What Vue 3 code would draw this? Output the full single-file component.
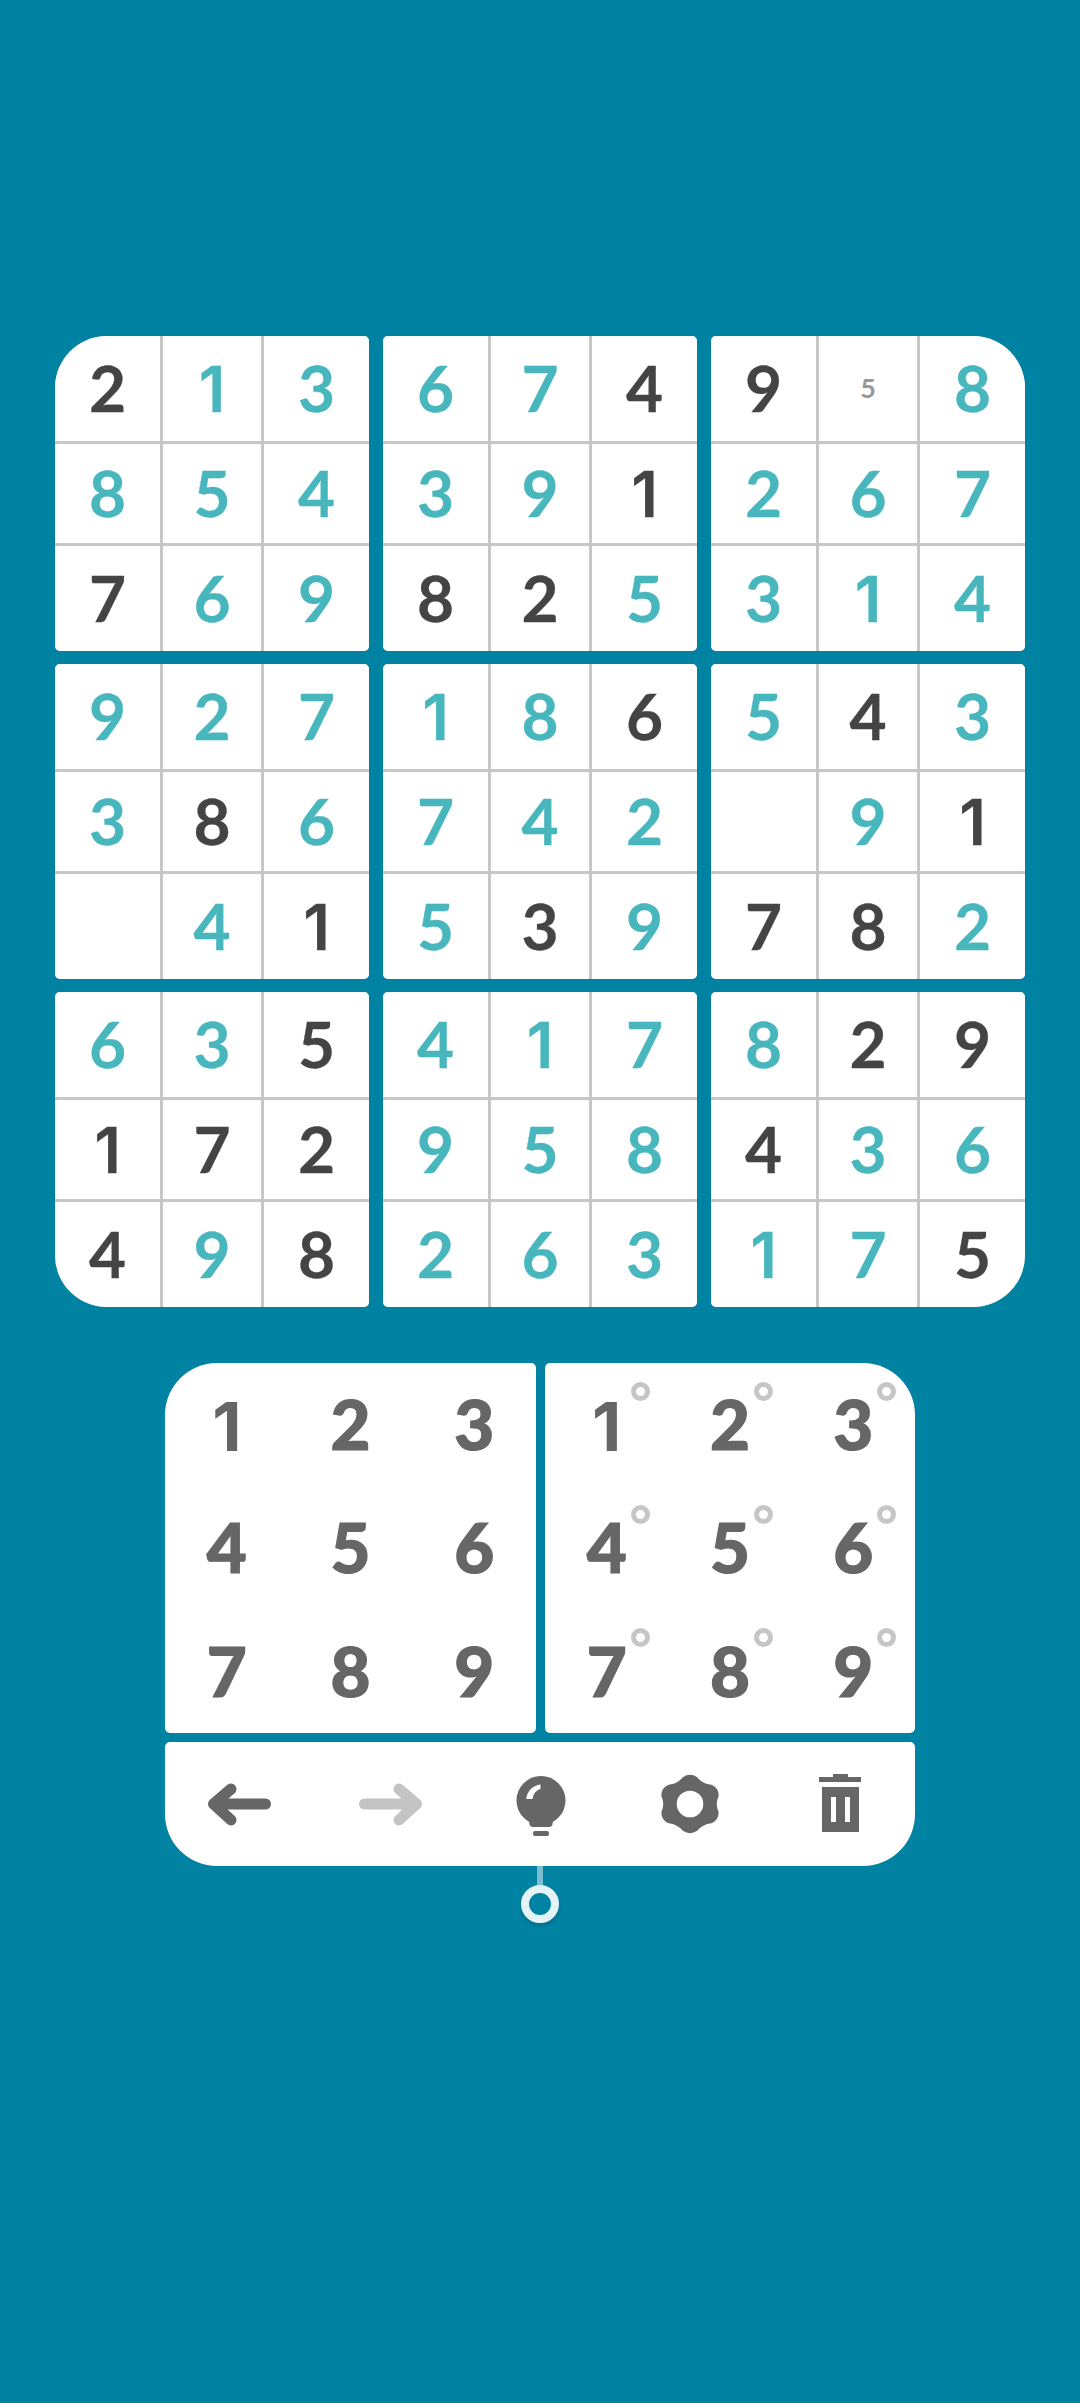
<script setup>
// d = given digit, t = player's digit, n = pencil note, _ = empty
const boxes = [
  { digits: '213854769', kinds: 'dtttttdtt' },
  { digits: '674391825', kinds: 'ttdttdddt' },
  { digits: '958267314', kinds: 'dnttttttt' },
  { digits: '927386_41', kinds: 'ttttdt_td' },
  { digits: '186742539', kinds: 'ttdttttdt' },
  { digits: '543_91782', kinds: 'tdt_tdddt' },
  { digits: '635172498', kinds: 'ttdddddtd' },
  { digits: '417958263', kinds: 'ttttttttt' },
  { digits: '829436175', kinds: 'tdddttttd' }
]

const cellsOf = (box) =>
  box.digits.split('').map((digit, i) => ({
    digit: digit === '_' ? '' : digit,
    kind: box.kinds[i]
  }))

const numbers = [1, 2, 3, 4, 5, 6, 7, 8, 9]

// hexagon with rounded corners and slightly hollow sides, in a 64x64 icon
const polar = (r, deg) => {
  const a = (deg * Math.PI) / 180
  return (32 + 1.04 * r * Math.sin(a)).toFixed(2) + ' ' + (32 - 0.97 * r * Math.cos(a)).toFixed(2)
}
let gearPath = 'M' + polar(28.5, -14)
for (let k = 0; k < 6; k++) {
  const a = k * 60
  gearPath += ' Q' + polar(32.6, a) + ' ' + polar(28.5, a + 14)
  gearPath += ' Q' + polar(24, a + 30) + ' ' + polar(28.5, a + 46)
}
gearPath += ' Z'
</script>

<template>
  <div class="page">
    <div class="board">
      <div v-for="(box, b) in boxes" :key="b" class="box">
        <div
          v-for="(cell, c) in cellsOf(box)"
          :key="c"
          class="cell"
          :class="['kind-' + cell.kind, { one: cell.digit === '1' }]"
        >{{ cell.digit }}</div>
      </div>
    </div>

    <div class="controls">
      <div class="pads">
        <div class="pad">
          <div v-for="n in numbers" :key="n" class="key" :class="{ one: n === 1 }">{{ n }}</div>
        </div>
        <div class="pad">
          <div v-for="n in numbers" :key="n" class="key" :class="{ one: n === 1 }">
            {{ n }}
            <span class="pencil"></span>
          </div>
        </div>
      </div>

      <div class="toolbar">
        <div class="tool">
          <svg viewBox="0 0 64 64" width="64" height="64">
            <path d="M57.5 32 H5.5 M23 17 L5.5 32 L23 48" fill="none" stroke="#666" stroke-width="11" stroke-linecap="round" stroke-linejoin="round" />
          </svg>
        </div>
        <div class="tool">
          <svg viewBox="0 0 64 64" width="64" height="64">
            <path d="M6.5 32 H58.5 M41 17 L58.5 32 L41 48" fill="none" stroke="#c4c4c4" stroke-width="11" stroke-linecap="round" stroke-linejoin="round" />
          </svg>
        </div>
        <div class="tool">
          <svg viewBox="0 0 64 64" width="64" height="64">
            <circle cx="33" cy="28.5" r="24.5" fill="#666" />
            <path d="M21.3 44 H44.7 V51 Q44.7 55 40.7 55 H25.3 Q21.3 55 21.3 51 Z" fill="#666" />
            <rect x="25" y="59" width="16" height="5" rx="2" fill="#666" />
            <path d="M18.2 27 C18.8 19.5 24.5 13.5 32.5 12.5 L32.5 17 C28.5 18 25.2 21.5 24.7 27 Z" fill="#fff" />
          </svg>
        </div>
        <div class="tool">
          <svg viewBox="0 0 64 64" width="64" height="64">
            <path :d="gearPath" fill="#666" />
            <circle cx="32" cy="32" r="13.3" fill="#fff" />
          </svg>
        </div>
        <div class="tool">
          <svg viewBox="0 0 64 64" width="64" height="64">
            <rect x="25" y="2" width="15" height="6" fill="#666" />
            <rect x="11" y="5" width="42" height="5" fill="#666" />
            <rect x="14" y="15" width="37" height="45" fill="#666" />
            <rect x="23" y="25" width="5" height="25" fill="#fff" />
            <rect x="37" y="25" width="5" height="25" fill="#fff" />
          </svg>
        </div>
      </div>
    </div>

    <div class="hint-line"></div>
    <div class="hint-ring"></div>
  </div>
</template>

<style scoped>
.page {
  box-sizing: border-box;
  min-height: 2403px;
  padding-top: 336px;
  display: flex;
  flex-direction: column;
  align-items: center;
  font-family: Lato, "Noto Sans", sans-serif;
}

.board {
  display: grid;
  grid-template-columns: repeat(3, 314px);
  gap: 13px 14px;
  border-radius: 52px;
  overflow: hidden;
}

.box {
  display: grid;
  grid-template-columns: 105px 98px 105px;
  grid-template-rows: 105px 99px 105px;
  gap: 3px;
  background: #c6c6c6;
  border-radius: 5px;
  overflow: hidden;
}

.cell {
  background: #fff;
  display: flex;
  align-items: center;
  justify-content: center;
  padding-bottom: 2px;
  font-size: 64px;
  line-height: 1;
  font-weight: 700;
  -webkit-text-stroke: 0.3px currentColor;
}

/* Lato's 1 has a foot, the reference's has none */
.cell.one {
  padding: 2px 0 0;
  font-family: Inter, sans-serif;
  font-size: 63px;
  font-weight: 600;
}

.kind-d {
  color: #444;
}

.kind-t {
  color: #48b6bd;
}

.cell.kind-n {
  color: #999;
  font-size: 27px;
  -webkit-text-stroke: 0;
}

.controls {
  margin-top: 56px;
  width: 750px;
  border-radius: 52px;
  overflow: hidden;
}

.pads {
  display: grid;
  grid-template-columns: 371px 370px;
  gap: 9px;
}

.pad {
  height: 370px;
  display: grid;
  grid-template-columns: repeat(3, 1fr);
  grid-template-rows: repeat(3, 1fr);
  background: #fff;
  border-radius: 5px;
}

.key {
  position: relative;
  display: flex;
  align-items: center;
  justify-content: center;
  padding-bottom: 2px;
  color: #666;
  font-size: 69px;
  line-height: 1;
  font-weight: 900;
  -webkit-text-stroke: 1.2px #666;
}

.key.one {
  padding: 2px 0 0;
  font-family: Inter, sans-serif;
  font-size: 68px;
  font-weight: 700;
  -webkit-text-stroke: 0;
}

.pencil {
  position: absolute;
  left: 50%;
  top: 50%;
  width: 19px;
  height: 19px;
  box-sizing: border-box;
  margin: -43px 0 0 24px;
  border: 5px solid #c6c6c6;
  border-radius: 50%;
}

.toolbar {
  margin-top: 9px;
  height: 124px;
  display: grid;
  grid-template-columns: repeat(5, 1fr);
  background: #fff;
  border-radius: 5px;
}

.tool {
  display: flex;
  align-items: center;
  justify-content: center;
}

.hint-line {
  width: 6px;
  height: 19px;
  background: #7dbfd0;
}

.hint-ring {
  box-sizing: border-box;
  width: 38px;
  height: 38px;
  border: 8.5px solid #e6f3f6;
  border-radius: 50%;
  box-shadow: 0 3px 4px rgba(0, 0, 0, 0.15);
}
</style>

<style>
html,
body {
  background: #0083a2;
}
</style>
